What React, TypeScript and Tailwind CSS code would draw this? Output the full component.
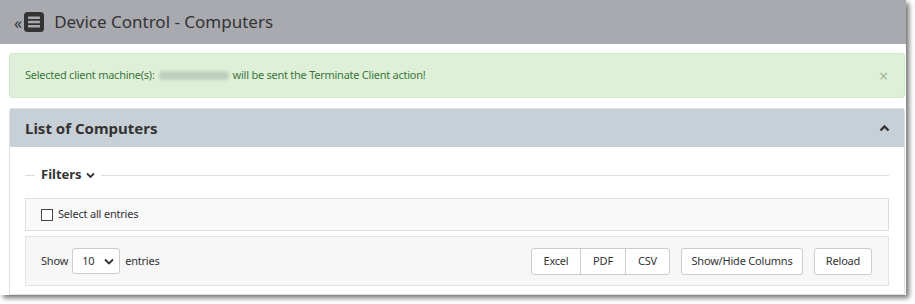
import React from "react";

const font = { fontFamily: "'Noto Sans', 'Open Sans', sans-serif" };

export default function App() {
  return (
    <div className="w-[915px] h-[304px] bg-white" style={font}>
      <div className="w-[906px] h-[295px] bg-white shadow-[3px_3px_5px_rgba(0,0,0,0.55)] flex flex-col overflow-hidden">
        {/* Top bar */}
        <div className="h-[44px] bg-[#a8aab0] flex items-center pl-[14px] shrink-0">
          <span className="text-[#333] text-[16px] leading-none mr-[2px] mt-[1px]">«</span>
          <svg width="20" height="20" viewBox="0 0 20 20" className="mr-[10px]">
            <rect x="0" y="0" width="20" height="20" rx="3.5" fill="#333" />
            <rect x="4" y="4.5" width="12" height="2.4" rx="0.6" fill="#a8aab0" />
            <rect x="4" y="8.8" width="12" height="2.4" rx="0.6" fill="#a8aab0" />
            <rect x="4" y="13.1" width="12" height="2.4" rx="0.6" fill="#a8aab0" />
          </svg>
          <span className="text-[17px] text-[#333]">Device Control - Computers</span>
        </div>

        {/* Alert */}
        <div className="mt-[9px] ml-[9px] mr-[1px] h-[45px] bg-[#dff0d8] border border-[#d0e9c6] rounded-[3px] flex items-center pl-[15px] pr-[16px] text-[11px] tracking-[-0.25px] text-[#3c763d]">
          <span>Selected client machine(s):</span>
          <span className="inline-block mx-[4px] w-[70px] h-[9px] bg-[#bfd0bf] blur-[1.5px] rounded-sm" />
          <span>will be sent the Terminate Client action!</span>
          <span className="ml-auto text-[#a3b59e] text-[16px] leading-none">×</span>
        </div>

        {/* Card */}
        <div className="mt-[10px] ml-[9px] mr-[1px] border border-[#dde1e5] rounded-t-[3px] flex flex-col flex-1">
          <div className="h-[38px] bg-[#c8d0d7] flex items-center pl-[15px] pr-[14px]">
            <span className="text-[15px] font-bold text-[#333]">List of Computers</span>
            <svg className="ml-auto" width="11" height="8" viewBox="0 0 11 8">
              <path d="M1.5 6.5 L5.5 2.5 L9.5 6.5" stroke="#333" strokeWidth="2.4" fill="none" />
            </svg>
          </div>
          <div className="bg-white px-[15px] pt-[17px] flex-1">
            {/* Filters legend */}
            <div className="flex items-center h-[22px]">
              <div className="w-[10px] h-px bg-[#ddd]" />
              <span className="ml-[6px] text-[13px] font-bold text-[#333]">Filters</span>
              <svg className="ml-[4px]" width="9" height="7" viewBox="0 0 9 7">
                <path d="M1 1.5 L4.5 5 L8 1.5" stroke="#333" strokeWidth="1.8" fill="none" />
              </svg>
              <div className="ml-[6px] flex-1 h-px bg-[#ddd]" />
            </div>
            {/* Select all */}
            <div className="mt-[12px] h-[33px] bg-[#f9f9f9] border border-[#ddd] flex items-center pl-[15px] text-[11px] tracking-[-0.2px] text-[#333]">
              <span className="w-[12px] h-[12px] border border-[#444] bg-white mr-[5px]" />
              Select all entries
            </div>
            {/* Toolbar */}
            <div className="mt-[5px] h-[50px] bg-[#f7f7f7] border border-[#e3e3e3] flex items-center pl-[15px] pr-[16px] text-[11px] tracking-[-0.2px] text-[#333]">
              <span>Show</span>
              <div className="ml-[4px] mr-[5px] w-[48px] h-[26px] bg-white border border-[#ccc] rounded-[3px] flex items-center pl-[9px] pr-[5px]">
                <span>10</span>
                <svg className="ml-auto" width="10" height="7" viewBox="0 0 10 7">
                  <path d="M1 1.5 L5 5.5 L9 1.5" stroke="#333" strokeWidth="1.8" fill="none" />
                </svg>
              </div>
              <span>entries</span>
              <div className="ml-auto flex items-center">
                <div className="flex h-[27px] border border-[#ccc] rounded-[3px] bg-white">
                  <span className="w-[49px] flex items-center justify-center border-r border-[#ccc]">Excel</span>
                  <span className="w-[45px] flex items-center justify-center border-r border-[#ccc]">PDF</span>
                  <span className="w-[43px] flex items-center justify-center">CSV</span>
                </div>
                <span className="ml-[11px] w-[122px] h-[27px] border border-[#ccc] rounded-[3px] bg-white flex items-center justify-center">Show/Hide Columns</span>
                <span className="ml-[11px] w-[58px] h-[27px] border border-[#ccc] rounded-[3px] bg-white flex items-center justify-center">Reload</span>
              </div>
            </div>
          </div>
        </div>
      </div>
    </div>
  );
}
